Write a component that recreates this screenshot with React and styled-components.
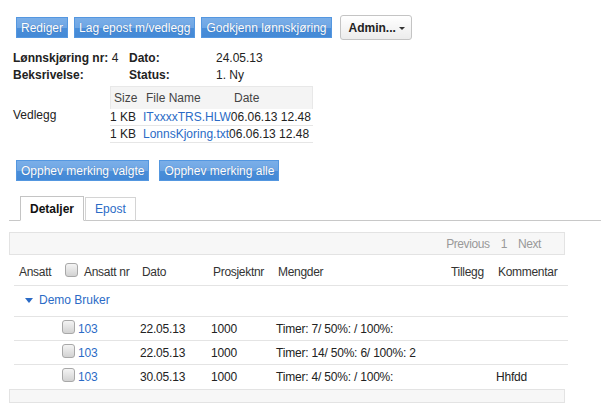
import React from 'react';
import styled, { createGlobalStyle } from 'styled-components';

const GlobalStyle = createGlobalStyle`
  body {
    margin: 0;
    background: #fff;
    font-family: 'Liberation Sans', Arial, sans-serif;
    font-size: 12px;
    color: #333;
  }
`;

const Page = styled.div`
  width: 601px;
  height: 407px;
  overflow: hidden;
  padding: 15px 0 0 9px;
  box-sizing: border-box;
`;

const Toolbar = styled.div`
  display: flex;
  align-items: center;
  gap: ${(p) => p.$gap || 6}px;
  padding-left: 7px;
  margin-top: ${(p) => p.$top || 0}px;
`;

const BlueButton = styled.button`
  height: 21px;
  padding: 0 4px;
  font-family: inherit;
  font-size: 12px;
  color: #fff;
  text-shadow: 0 0 1px rgba(30, 70, 130, 0.5);
  border: 1px solid #5497e0;
  border-radius: 0;
  background: linear-gradient(to bottom, #7aaee8 0%, #6ea6e4 50%, #4a8ed9 51%, #4489d6 100%);
  cursor: pointer;
  white-space: nowrap;
`;

const AdminButton = styled.button`
  height: 25px;
  margin-left: 2px;
  padding: 0 6px 0 8px;
  font-family: inherit;
  font-size: 12px;
  font-weight: bold;
  color: #222;
  border: 1px solid #c4c4c4;
  border-radius: 3px;
  background: linear-gradient(to bottom, #ffffff, #ececec);
  display: flex;
  align-items: center;
  gap: 3px;
`;

const Caret = styled.span`
  width: 0;
  height: 0;
  border-left: 3px solid transparent;
  border-right: 3px solid transparent;
  border-top: 3px solid #333;
  margin-top: 1px;
`;

const InfoGrid = styled.div`
  display: grid;
  grid-template-columns: 116px 87px auto;
  row-gap: 1px;
  line-height: 16px;
  padding-left: 4px;
  margin-top: 10px;
  color: #222;
`;

const Label = styled.span`
  font-weight: bold;
`;

const Attachments = styled.div`
  display: flex;
  align-items: center;
  padding-left: 4px;
  margin-top: 3px;
`;

const AttachLabel = styled.div`
  width: 97px;
  color: #222;
`;

const FileTable = styled.div`
  width: 203px;
  color: #222;
`;

const FileHead = styled.div`
  display: flex;
  height: 23px;
  align-items: center;
  background: #f4f4f4;
  border: 1px solid #e8e8e8;
  border-bottom: none;
  box-sizing: border-box;
  color: #444;
`;

const HeadCell = styled.span`
  width: ${(p) => p.$w}px;
  padding-left: 3px;
  box-sizing: border-box;
`;

const FileRow = styled.div`
  display: flex;
  height: 16px;
  align-items: center;
  border-bottom: 1px solid #e6e6e6;
  white-space: nowrap;
`;

const SizeCell = styled.span`
  width: 33px;
`;

const Link = styled.a`
  color: #2b6bc6;
  text-decoration: none;
`;

const TabBar = styled.div`
  display: flex;
  align-items: flex-end;
  height: 25px;
  padding-left: 11px;
  margin-top: 14px;
  border-bottom: 1px solid #c8c8c8;
`;

const Tab = styled.div`
  height: ${(p) => (p.$active ? 25 : 24)}px;
  padding: 0 9px;
  margin-right: 1px;
  margin-bottom: -1px;
  display: flex;
  align-items: center;
  box-sizing: border-box;
  border: 1px solid ${(p) => (p.$active ? '#c4c4c4' : '#d4d4d4')};
  border-bottom: 1px solid ${(p) => (p.$active ? '#fff' : '#c8c8c8')};
  background: #fff;
  font-weight: ${(p) => (p.$active ? 'bold' : 'normal')};
  color: ${(p) => (p.$active ? '#111' : '#2b6bc6')};
`;

const GreyBar = styled.div`
  width: 556px;
  height: ${(p) => p.$h}px;
  margin-top: ${(p) => p.$top || 0}px;
  box-sizing: border-box;
  background: #f7f7f7;
  border: 1px solid #e3e3e3;
  display: flex;
  align-items: center;
  justify-content: flex-end;
  padding-right: 23px;
  gap: 11px;
  color: #999;
  letter-spacing: -0.4px;
`;

const Grid = styled.div`
  width: 554px;
  margin-left: 5px;
  margin-top: 4px;
`;

const columns = '46px 77px 71px 65px 173px 47px 75px';

const HeaderRow = styled.div`
  display: grid;
  grid-template-columns: ${columns};
  height: 26px;
  align-items: center;
  border-bottom: 1px solid #e4e4e4;
  color: #333;
  letter-spacing: -0.3px;
  & > span {
    padding-left: 5px;
    white-space: nowrap;
  }
`;

const GroupRow = styled.div`
  height: 31px;
  display: flex;
  align-items: center;
  gap: 6px;
  padding-left: 11px;
  padding-bottom: 3px;
  box-sizing: border-box;
  border-bottom: 1px solid #e4e4e4;
  color: #2b6bc6;
`;

const GroupArrow = styled.span`
  width: 0;
  height: 0;
  border-left: 4px solid transparent;
  border-right: 4px solid transparent;
  border-top: 5px solid #2b6bc6;
  margin-top: 2px;
`;

const DataRow = styled.div`
  display: grid;
  grid-template-columns: ${columns};
  height: 24px;
  align-items: center;
  border-bottom: ${(p) => (p.$last ? 'none' : '1px solid #e4e4e4')};
  box-sizing: border-box;
  color: #222;
  letter-spacing: -0.2px;
  & > span {
    padding-left: 3px;
    white-space: nowrap;
  }
`;

const CheckCell = styled.span`
  display: flex;
  align-items: center;
  gap: ${(p) => p.$gap}px;
`;

const Checkbox = styled.span`
  display: inline-block;
  width: 11px;
  height: 12px;
  border: 1px solid #a8a8a8;
  border-radius: 3px;
  background: linear-gradient(to bottom, #f4f4f4, #d2d2d2);
  margin-top: ${(p) => (p.$up ? -4 : 0)}px;
`;

const rows = [
  { date: '22.05.13', mengder: 'Timer: 7/ 50%: / 100%:', kommentar: '' },
  { date: '22.05.13', mengder: 'Timer: 14/ 50%: 6/ 100%: 2', kommentar: '' },
  { date: '30.05.13', mengder: 'Timer: 4/ 50%: / 100%:', kommentar: 'Hhfdd' },
];

export default function App() {
  return (
    <Page>
      <GlobalStyle />
      <Toolbar>
        <BlueButton>Rediger</BlueButton>
        <BlueButton>Lag epost m/vedlegg</BlueButton>
        <BlueButton>Godkjenn lønnskjøring</BlueButton>
        <AdminButton>
          Admin... <Caret />
        </AdminButton>
      </Toolbar>

      <InfoGrid>
        <span>
          <Label>Lønnskjøring nr:</Label> 4
        </span>
        <Label>Dato:</Label>
        <span>24.05.13</span>
        <Label>Beksrivelse:</Label>
        <Label>Status:</Label>
        <span>1. Ny</span>
      </InfoGrid>

      <Attachments>
        <AttachLabel>Vedlegg</AttachLabel>
        <FileTable>
          <FileHead>
            <HeadCell $w={32}>Size</HeadCell>
            <HeadCell $w={88}>File Name</HeadCell>
            <HeadCell $w={80}>Date</HeadCell>
          </FileHead>
          <FileRow>
            <SizeCell>1 KB</SizeCell>
            <Link href="#">ITxxxxTRS.HLW</Link>
            <span>06.06.13 12.48</span>
          </FileRow>
          <FileRow>
            <SizeCell>1 KB</SizeCell>
            <Link href="#">LonnsKjoring.txt</Link>
            <span>06.06.13 12.48</span>
          </FileRow>
        </FileTable>
      </Attachments>

      <Toolbar $top={17} $gap={10}>
        <BlueButton>Opphev merking valgte</BlueButton>
        <BlueButton>Opphev merking alle</BlueButton>
      </Toolbar>

      <TabBar>
        <Tab $active>Detaljer</Tab>
        <Tab>Epost</Tab>
      </TabBar>

      <GreyBar $h={23} $top={11}>
        <span>Previous</span>
        <span>1</span>
        <span>Next</span>
      </GreyBar>

      <Grid>
        <HeaderRow>
          <span>Ansatt</span>
          <CheckCell $gap={6} style={{ paddingLeft: 5 }}>
            <Checkbox $up />
            Ansatt nr
          </CheckCell>
          <span>Dato</span>
          <span>Prosjektnr</span>
          <span>Mengder</span>
          <span>Tillegg</span>
          <span>Kommentar</span>
        </HeaderRow>
        <GroupRow>
          <GroupArrow />
          Demo Bruker
        </GroupRow>
        {rows.map((r, i) => (
          <DataRow key={i} $last={i === rows.length - 1}>
            <span />
            <CheckCell $gap={3} style={{ paddingLeft: 2 }}>
              <Checkbox $up />
              <Link href="#">103</Link>
            </CheckCell>
            <span>{r.date}</span>
            <span>1000</span>
            <span>{r.mengder}</span>
            <span />
            <span>{r.kommentar}</span>
          </DataRow>
        ))}
      </Grid>
      <GreyBar $h={14} />
    </Page>
  );
}
